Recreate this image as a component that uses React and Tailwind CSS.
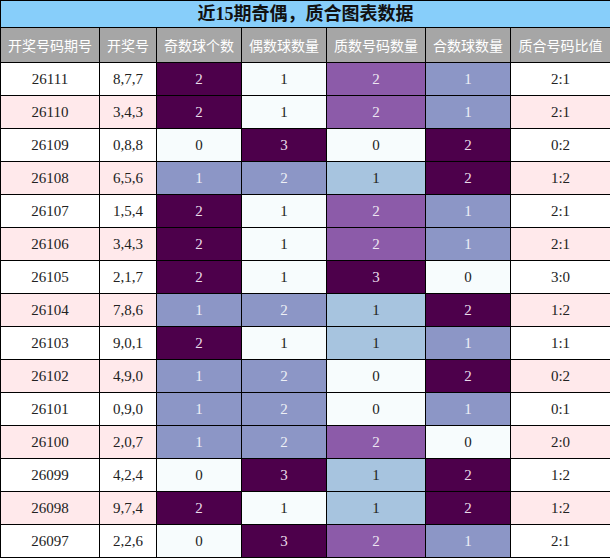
import React from 'react'

const LIGHT = 'bg-[#f7fcfd] text-[#222]'
const LBLUE = 'bg-[#a7c4df] text-[#222]'
const MID = 'bg-[#8c96c6] text-[#eef0f6]'
const PURP = 'bg-[#8c5ba9] text-[#eee6f2]'
const DARK = 'bg-[#4d004b] text-[#eadcea]'

// per-column value → colour
const oddColor = { 0: LIGHT, 1: MID, 2: DARK }
const evenColor = { 1: LIGHT, 2: MID, 3: DARK }
const primeColor = { 0: LIGHT, 1: LBLUE, 2: PURP, 3: DARK }
const compColor = { 0: LIGHT, 1: MID, 2: DARK }

const rows = [
  ['26111', '8,7,7', 2, 1, 2, 1, '2:1'],
  ['26110', '3,4,3', 2, 1, 2, 1, '2:1'],
  ['26109', '0,8,8', 0, 3, 0, 2, '0:2'],
  ['26108', '6,5,6', 1, 2, 1, 2, '1:2'],
  ['26107', '1,5,4', 2, 1, 2, 1, '2:1'],
  ['26106', '3,4,3', 2, 1, 2, 1, '2:1'],
  ['26105', '2,1,7', 2, 1, 3, 0, '3:0'],
  ['26104', '7,8,6', 1, 2, 1, 2, '1:2'],
  ['26103', '9,0,1', 2, 1, 1, 1, '1:1'],
  ['26102', '4,9,0', 1, 2, 0, 2, '0:2'],
  ['26101', '0,9,0', 1, 2, 0, 1, '0:1'],
  ['26100', '2,0,7', 1, 2, 2, 0, '2:0'],
  ['26099', '4,2,4', 0, 3, 1, 2, '1:2'],
  ['26098', '9,7,4', 2, 1, 1, 2, '1:2'],
  ['26097', '2,2,6', 0, 3, 2, 1, '2:1'],
]

const headers = ['开奖号码期号', '开奖号', '奇数球个数', '偶数球数量', '质数号码数量', '合数球数量', '质合号码比值']

export default function App() {
  return (
    <div className="w-[610px] bg-white">
      <table className="w-[610px] table-fixed border-collapse border border-black font-['Liberation_Serif','Noto_Sans_CJK_SC',serif] text-[15px]">
        <colgroup>
          <col className="w-[99px]" />
          <col className="w-[57px]" />
          <col className="w-[85px]" />
          <col className="w-[85px]" />
          <col className="w-[99px]" />
          <col className="w-[85px]" />
          <col className="w-[100px]" />
        </colgroup>
        <thead>
          <tr className="h-[27px]">
            <th colSpan={7} className="border border-black bg-[#87cefa] p-0 text-center font-['Liberation_Serif','Noto_Sans_CJK_SC',serif] text-[18px] font-bold leading-none text-[#111]">
              近15期奇偶，质合图表数据
            </th>
          </tr>
          <tr className="h-[35px]">
            {headers.map((h) => (
              <th key={h} className="border border-black bg-[#a6a6a6] p-0 text-center font-['Noto_Sans_CJK_SC',sans-serif] text-[14px] font-normal text-white">
                {h}
              </th>
            ))}
          </tr>
        </thead>
        <tbody>
          {rows.map((r, i) => {
            const rowBg = i % 2 === 0 ? 'bg-white' : 'bg-[#ffe9eb]'
            return (
              <tr key={r[0]} className="h-[33px]">
                <td className={`border border-black p-0 text-center text-[#222] ${rowBg}`}>{r[0]}</td>
                <td className={`border border-black p-0 text-center text-[#222] ${rowBg}`}>{r[1]}</td>
                <td className={`border border-black p-0 text-center ${oddColor[r[2]]}`}>{r[2]}</td>
                <td className={`border border-black p-0 text-center ${evenColor[r[3]]}`}>{r[3]}</td>
                <td className={`border border-black p-0 text-center ${primeColor[r[4]]}`}>{r[4]}</td>
                <td className={`border border-black p-0 text-center ${compColor[r[5]]}`}>{r[5]}</td>
                <td className={`border border-black p-0 text-center text-[#222] ${rowBg}`}>{r[6]}</td>
              </tr>
            )
          })}
        </tbody>
      </table>
    </div>
  )
}
